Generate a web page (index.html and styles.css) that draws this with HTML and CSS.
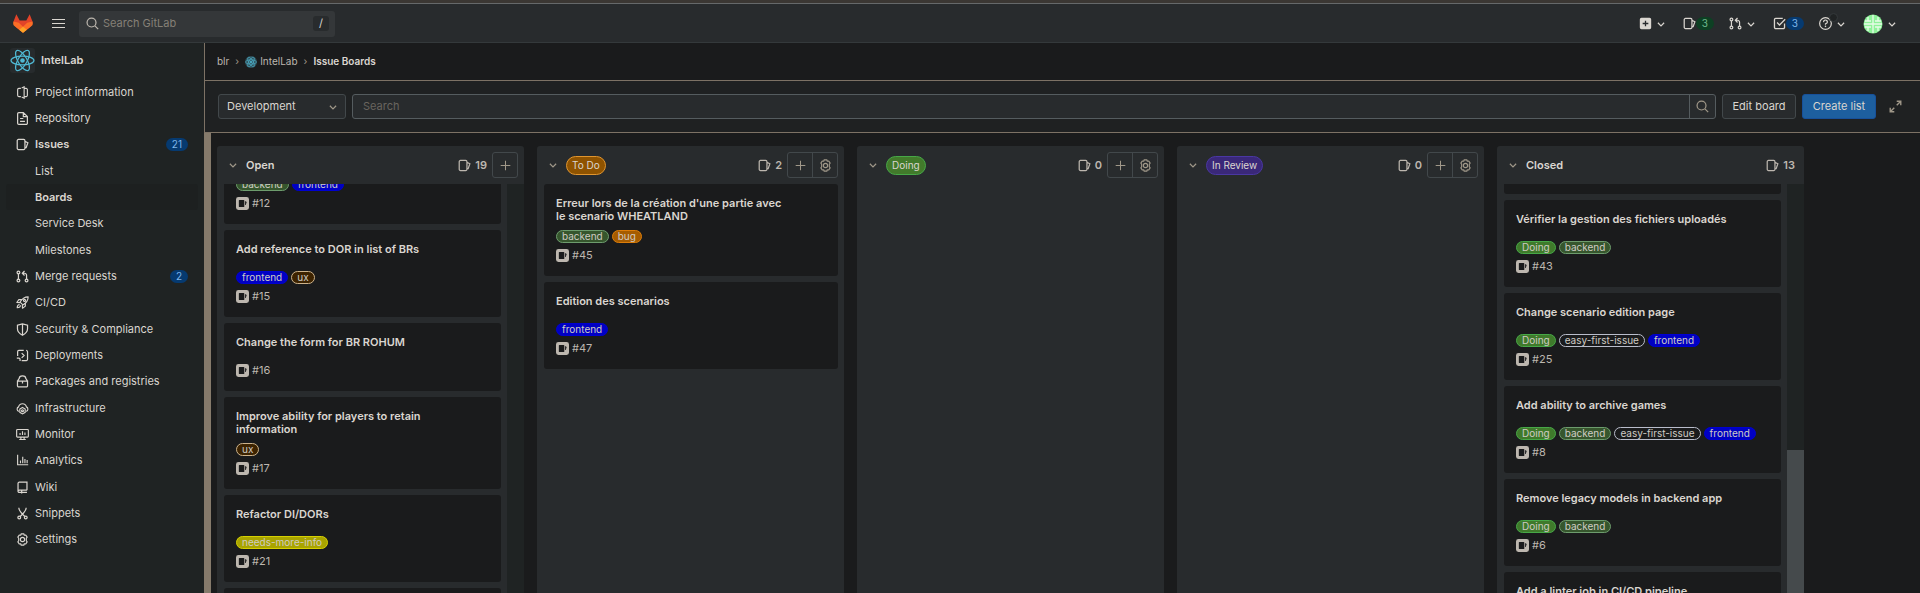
FILE: index.html
```html
<!DOCTYPE html>
<html lang="en">
<head>
<meta charset="utf-8">
<meta name="viewport" content="width=device-width, initial-scale=1">
<title>Issue Boards · IntelLab · GitLab</title>
<link rel="stylesheet" href="styles.css">
</head>
<body>
<svg class="sprite" aria-hidden="true">
  <symbol id="chevron" viewBox="0 0 16 16"><path d="M3 6 8 11 13 6" fill="none" stroke="currentColor" stroke-width="1.900"/></symbol>
  <symbol id="issues" viewBox="0 0 16 16"><path d="M3 1.800h6.500a1.500 1.500 0 0 1 1.500 1.500v9.400a1.500 1.500 0 0 1-1.500 1.500H3a1.500 1.500 0 0 1-1.500-1.500V3.300A1.500 1.500 0 0 1 3 1.800zM11 4.200l3.600 1.600-2.100 6H11" fill="none" stroke="currentColor" stroke-width="1.500"/></symbol>
  <symbol id="type" viewBox="0 0 16 16"><path fill-rule="evenodd" fill="currentColor" d="M3 0h10a3 3 0 0 1 3 3v10a3 3 0 0 1-3 3H3a3 3 0 0 1-3-3V3a3 3 0 0 1 3-3zm1.200 3.700a.7.7 0 0 0-.7.7v7.200a.7.7 0 0 0 .7.7h5.300a.7.7 0 0 0 .7-.7V4.400a.7.7 0 0 0-.7-.7zM11.200 4.800v5h.800L13.200 6z"/></symbol>
  <symbol id="plus" viewBox="0 0 16 16"><path d="M8 1v14M1 8h14" fill="none" stroke="currentColor" stroke-width="1.500"/></symbol>
  <symbol id="plus-square" viewBox="0 0 16 16"><path fill-rule="evenodd" fill="currentColor" d="M3 1h10a2 2 0 0 1 2 2v10a2 2 0 0 1-2 2H3a2 2 0 0 1-2-2V3a2 2 0 0 1 2-2zm4.200 3.500v2.700H4.500v1.600h2.700v2.700h1.600V8.800h2.700V7.200H8.800V4.500z"/></symbol>
  <symbol id="gear" viewBox="0 0 16 16"><g fill="none" stroke="currentColor" stroke-width="1.400"><path d="M6.400 1h3.200l.6 1.700 1.800-.3 1.700 2.700-1 1.400v3l1 1.400-1.700 2.700-1.800-.3-.6 1.700H6.400l-.6-1.700-1.800.3-1.700-2.700 1-1.400v-3l-1-1.400L4 2.400l1.800.3z" stroke-linejoin="round"/><circle cx="8" cy="8" r="2.600"/></g></symbol>
  <symbol id="search" viewBox="0 0 16 16"><g fill="none" stroke="currentColor" stroke-width="1.500"><circle cx="6.800" cy="6.800" r="5.500"/><path d="m11 11 4 4"/></g></symbol>
  <symbol id="merge" viewBox="0 0 16 16"><g fill="none" stroke="currentColor" stroke-width="1.500"><circle cx="3" cy="3" r="1.700"/><circle cx="3" cy="13" r="1.700"/><circle cx="13" cy="13" r="1.700"/><path d="M3 4.700v6.600M13 11.300V6.500A2.500 2.500 0 0 0 10.500 4H8.500M10.500 1.200 7.800 4l2.700 2.800"/></g></symbol>
  <symbol id="todo" viewBox="0 0 16 16"><path d="M12 1.800H3.300a1.500 1.500 0 0 0-1.500 1.500v9.400a1.500 1.500 0 0 0 1.500 1.500h9.400a1.500 1.500 0 0 0 1.500-1.500V8M5 6.800l3 3 7-7" fill="none" stroke="currentColor" stroke-width="1.600"/></symbol>
  <symbol id="help" viewBox="0 0 16 16"><g fill="none" stroke="currentColor" stroke-width="1.500"><circle cx="8" cy="8" r="7.200"/><path d="M5.700 6.300A2.300 2.300 0 1 1 8 8.300v1.300"/></g><circle cx="8" cy="11.500" r="1" fill="currentColor"/></symbol>
  <symbol id="project" viewBox="0 0 16 16"><path d="M6 3H3.500A1.500 1.500 0 0 0 2 4.500v7A1.500 1.500 0 0 0 3.500 13H6M7 2.500l3-1.500v14l-3-1.500M10 3h2.500A1.500 1.500 0 0 1 14 4.500v7a1.500 1.500 0 0 1-1.500 1.500H10" fill="none" stroke="currentColor" stroke-width="1.400"/></symbol>
  <symbol id="doc" viewBox="0 0 16 16"><path d="M9 .800H3.500A1.500 1.500 0 0 0 2 2.300v11.400a1.500 1.500 0 0 0 1.500 1.500h9a1.500 1.500 0 0 0 1.500-1.500V5.500zv5h5M5 8h4M5 11.500h6" fill="none" stroke="currentColor" stroke-width="1.500"/></symbol>
  <symbol id="rocket" viewBox="0 0 16 16"><g fill="none" stroke="currentColor" stroke-width="1.400" stroke-linejoin="round"><path d="M15 1c-5 0-7.500 2-10 6.500L8.500 11C13 8.500 15 6 15 1zM7 4.500H3.500L1 8l4 .2M11.500 9v3.500L8 15l-.2-4M4.500 10.500c-2 0-3 2-3 4 2 0 4-1 4-3"/><circle cx="10.500" cy="5.500" r="1.300"/></g></symbol>
  <symbol id="shield" viewBox="0 0 16 16"><path d="M8 1 1.800 2.800V7c0 3.700 2.400 6 6.200 8 3.800-2 6.200-4.300 6.200-8V2.800zv14" fill="none" stroke="currentColor" stroke-width="1.500"/></symbol>
  <symbol id="deploy" viewBox="0 0 16 16"><path d="M2 8.500V3.300a1.500 1.500 0 0 1 1.500-1.500h6M12.500 1.800A1.700 1.700 0 0 1 14.200 3.500v9.200a1.500 1.500 0 0 1-1.500 1.500H7M1 11.200h2.500A1.500 1.500 0 0 1 5 12.700v2M7 5l3 3-3 3" fill="none" stroke="currentColor" stroke-width="1.500"/></symbol>
  <symbol id="package" viewBox="0 0 16 16"><path d="M1.800 7.500h12.400v5.700a1.500 1.500 0 0 1-1.500 1.500H3.300a1.500 1.500 0 0 1-1.500-1.500zL4 4.200C4 2.500 5.500 1.200 8 1.200s4 1.300 4 3l2.200 3.300M8 7.500v3" fill="none" stroke="currentColor" stroke-width="1.500"/></symbol>
  <symbol id="cloud" viewBox="0 0 16 16"><g fill="none" stroke="currentColor" stroke-width="1.400"><path d="M3.500 11.500a2.900 2.900 0 0 1-.3-5.500A4.900 4.900 0 0 1 12.800 6a2.900 2.900 0 0 1-.3 5.500"/><path d="m8 6.800 3.300 1.900v4L8 14.700l-3.300-2v-4z"/><circle cx="8" cy="10.700" r="1.200"/></g></symbol>
  <symbol id="monitor" viewBox="0 0 16 16"><path d="M1.800 1.800h12.400a1 1 0 0 1 1 1v7.400a1 1 0 0 1-1 1H1.800a1 1 0 0 1-1-1V2.800a1 1 0 0 1 1-1zM4 14.200h8M6 11.500v2.500M10 11.500v2.500M5 6v2.700M8 4v4.700M11 5.500v3.200" fill="none" stroke="currentColor" stroke-width="1.400"/></symbol>
  <symbol id="chart" viewBox="0 0 16 16"><path d="M2 1v12.200h13M5.500 8v3.500M8.300 3.500v8M11 6v5.500M13.700 7.500v4" fill="none" stroke="currentColor" stroke-width="1.400"/></symbol>
  <symbol id="book" viewBox="0 0 16 16"><path d="M13.500 11.500v-10H4A1.500 1.500 0 0 0 2.500 3v9.500A1.500 1.500 0 0 1 4 11.200h9.500M2.500 12.500A1.500 1.500 0 0 0 4 14h9.500M7 11.500v4" fill="none" stroke="currentColor" stroke-width="1.500"/></symbol>
  <symbol id="scissors" viewBox="0 0 16 16"><g fill="none" stroke="currentColor" stroke-width="1.500"><path d="M3.500 1c0 4 3 6 7.500 10.800M12.500 1c0 4-3 6-7.500 10.800"/><circle cx="4" cy="13" r="1.700"/><circle cx="12" cy="13" r="1.700"/></g></symbol>
  <symbol id="expand" viewBox="0 0 16 16"><path d="M9.500 1.500h5v5M14.500 1.500 9.500 6.500M6.500 14.500h-5v-5M1.500 14.500l5-5" fill="none" stroke="currentColor" stroke-width="1.700"/></symbol>
  <symbol id="react" viewBox="0 0 24 24"><g fill="none" stroke="#4fb8d3" stroke-width="1.200"><ellipse cx="12" cy="12" rx="11" ry="4.300"/><ellipse cx="12" cy="12" rx="11" ry="4.300" transform="rotate(60 12 12)"/><ellipse cx="12" cy="12" rx="11" ry="4.300" transform="rotate(120 12 12)"/></g><circle cx="12" cy="12" r="2.200" fill="#4fb8d3"/></symbol>
</svg>

<header class="navbar">
  <a class="logo" href="#" aria-label="GitLab">
    <svg viewBox="0 0 24 22"><path fill="#e24329" d="M12 22 3 15 .5 9 4 0l4 7.500h8L20 0l3.500 9-2.500 6z"/><path fill="#fc6d26" d="M12 22 1 13.500Q-.5 11 .7 8.500L7 10l5 5 5-5 6.300-1.500q1.200 2.500-.3 5z"/><path fill="#fca326" d="m12 22-4.600-3.600L12 15l4.600 3.400z"/></svg>
  </a>
  <button class="plain menu" aria-label="Menu"><svg viewBox="0 0 13 9"><path d="M0 .500h13M0 4.500h13M0 8.500h13" stroke="currentColor"/></svg></button>
  <label class="top-search">
    <svg class="icon"><use href="#search"/></svg>
    <input type="text" placeholder="Search GitLab" aria-label="Search GitLab">
    <kbd>/</kbd>
  </label>
  <nav class="tools" aria-label="Tools">
    <button class="plain" aria-label="Create new"><svg class="icon"><use href="#plus-square"/></svg><svg class="chev"><use href="#chevron"/></svg></button>
    <a class="counted" href="#"><svg class="icon"><use href="#issues"/></svg><span class="badge green">3</span></a>
    <button class="plain" aria-label="Merge requests"><svg class="icon"><use href="#merge"/></svg><svg class="chev"><use href="#chevron"/></svg></button>
    <a class="counted" href="#"><svg class="icon"><use href="#todo"/></svg><span class="badge">3</span></a>
    <button class="plain help" aria-label="Help"><svg class="icon"><use href="#help"/></svg><span class="dot"></span><svg class="chev"><use href="#chevron"/></svg></button>
    <button class="plain user" aria-label="Account"><svg class="face" viewBox="0 0 20 20"><circle cx="10" cy="10" r="9.500" fill="#8ff29a"/><path d="M10 1v18M1 10h18M5 3v4h3M15 3v4h-3M5 17v-4h3M15 17v-4h-3M2 7h3M15 7h3M2 13h3M15 13h3" fill="none" stroke="#e9fbe9" stroke-width="1.300"/></svg><svg class="chev"><use href="#chevron"/></svg></button>
  </nav>
</header>

<div class="page">
  <aside class="sidebar">
    <a class="project" href="#"><svg><use href="#react"/></svg>IntelLab</a>
    <ul class="menu-list">
      <li><a href="#"><svg class="icon"><use href="#project"/></svg>Project information</a></li>
      <li><a href="#"><svg class="icon"><use href="#doc"/></svg>Repository</a></li>
      <li><a class="strong" href="#"><svg class="icon"><use href="#issues"/></svg>Issues<span class="badge">21</span></a></li>
      <li class="sub"><a href="#">List</a></li>
      <li class="sub"><a class="strong active" href="#">Boards</a></li>
      <li class="sub"><a href="#">Service Desk</a></li>
      <li class="sub"><a href="#">Milestones</a></li>
      <li><a href="#"><svg class="icon"><use href="#merge"/></svg>Merge requests<span class="badge">2</span></a></li>
      <li><a href="#"><svg class="icon"><use href="#rocket"/></svg>CI/CD</a></li>
      <li><a href="#"><svg class="icon"><use href="#shield"/></svg>Security &amp; Compliance</a></li>
      <li><a href="#"><svg class="icon"><use href="#deploy"/></svg>Deployments</a></li>
      <li><a href="#"><svg class="icon"><use href="#package"/></svg>Packages and registries</a></li>
      <li><a href="#"><svg class="icon"><use href="#cloud"/></svg>Infrastructure</a></li>
      <li><a href="#"><svg class="icon"><use href="#monitor"/></svg>Monitor</a></li>
      <li><a href="#"><svg class="icon"><use href="#chart"/></svg>Analytics</a></li>
      <li><a href="#"><svg class="icon"><use href="#book"/></svg>Wiki</a></li>
      <li><a href="#"><svg class="icon"><use href="#scissors"/></svg>Snippets</a></li>
      <li><a href="#"><svg class="icon"><use href="#gear"/></svg>Settings</a></li>
    </ul>
  </aside>

  <main class="content">
    <nav class="crumbs" aria-label="Breadcrumb">
      <a href="#">blr</a><span class="sep">›</span>
      <a href="#"><svg><use href="#react"/></svg>IntelLab</a><span class="sep">›</span>
      <a class="here" href="#">Issue Boards</a>
    </nav>

    <div class="filters">
      <div class="picker">
        <select aria-label="Board"><option>Development</option></select>
        <svg class="chev"><use href="#chevron"/></svg>
      </div>
      <div class="search">
        <input type="text" placeholder="Search" aria-label="Search issues">
        <button aria-label="Search"><svg class="icon"><use href="#search"/></svg></button>
      </div>
      <button class="btn">Edit board</button>
      <button class="btn primary">Create list</button>
      <button class="plain expand" aria-label="Full screen"><svg class="icon"><use href="#expand"/></svg></button>
    </div>

    <div class="board">
      <section class="list">
        <header>
          <svg class="chev"><use href="#chevron"/></svg><h2>Open</h2>
          <span class="total"><svg class="icon"><use href="#issues"/></svg>19</span>
          <div class="actions"><button aria-label="New issue"><svg class="small"><use href="#plus"/></svg></button></div>
        </header>
        <div class="body">
          <div class="cards from-labels">
            <article class="card"><div class="labels"><span class="label backend">backend</span><span class="label frontend">frontend</span></div><div class="ref"><svg class="icon"><use href="#type"/></svg>#12</div></article>
            <article class="card"><h3>Add reference to DOR in list of BRs</h3><div class="labels"><span class="label frontend">frontend</span><span class="label ux">ux</span></div><div class="ref"><svg class="icon"><use href="#type"/></svg>#15</div></article>
            <article class="card"><h3>Change the form for BR ROHUM</h3><div class="ref"><svg class="icon"><use href="#type"/></svg>#16</div></article>
            <article class="card"><h3>Improve ability for players to retain information</h3><div class="labels"><span class="label ux">ux</span></div><div class="ref"><svg class="icon"><use href="#type"/></svg>#17</div></article>
            <article class="card"><h3>Refactor DI/DORs</h3><div class="labels"><span class="label info">needs-more-info</span></div><div class="ref"><svg class="icon"><use href="#type"/></svg>#21</div></article>
            <article class="card"></article>
          </div>
          <div class="track"></div>
        </div>
      </section>

      <section class="list">
        <header>
          <svg class="chev"><use href="#chevron"/></svg><h2 class="pill todo">To Do</h2>
          <span class="total"><svg class="icon"><use href="#issues"/></svg>2</span>
          <div class="actions"><button aria-label="New issue"><svg class="small"><use href="#plus"/></svg></button><button aria-label="List settings"><svg class="icon"><use href="#gear"/></svg></button></div>
        </header>
        <div class="body">
          <div class="cards">
            <article class="card"><h3>Erreur lors de la création d'une partie avec le scenario WHEATLAND</h3><div class="labels"><span class="label backend">backend</span><span class="label bug">bug</span></div><div class="ref"><svg class="icon"><use href="#type"/></svg>#45</div></article>
            <article class="card"><h3>Edition des scenarios</h3><div class="labels"><span class="label frontend">frontend</span></div><div class="ref"><svg class="icon"><use href="#type"/></svg>#47</div></article>
          </div>
        </div>
      </section>

      <section class="list">
        <header>
          <svg class="chev"><use href="#chevron"/></svg><h2 class="pill doing">Doing</h2>
          <span class="total"><svg class="icon"><use href="#issues"/></svg>0</span>
          <div class="actions"><button aria-label="New issue"><svg class="small"><use href="#plus"/></svg></button><button aria-label="List settings"><svg class="icon"><use href="#gear"/></svg></button></div>
        </header>
      </section>

      <section class="list">
        <header>
          <svg class="chev"><use href="#chevron"/></svg><h2 class="pill review">In Review</h2>
          <span class="total"><svg class="icon"><use href="#issues"/></svg>0</span>
          <div class="actions"><button aria-label="New issue"><svg class="small"><use href="#plus"/></svg></button><button aria-label="List settings"><svg class="icon"><use href="#gear"/></svg></button></div>
        </header>
      </section>

      <section class="list">
        <header>
          <svg class="chev"><use href="#chevron"/></svg><h2>Closed</h2>
          <span class="total last"><svg class="icon"><use href="#issues"/></svg>13</span>
        </header>
        <div class="body">
          <div class="cards from-edge">
            <article class="card"></article>
            <article class="card"><h3>Vérifier la gestion des fichiers uploadés</h3><div class="labels"><span class="label doing">Doing</span><span class="label backend">backend</span></div><div class="ref"><svg class="icon"><use href="#type"/></svg>#43</div></article>
            <article class="card"><h3>Change scenario edition page</h3><div class="labels"><span class="label doing">Doing</span><span class="label easy">easy-first-issue</span><span class="label frontend">frontend</span></div><div class="ref"><svg class="icon"><use href="#type"/></svg>#25</div></article>
            <article class="card"><h3>Add ability to archive games</h3><div class="labels"><span class="label doing">Doing</span><span class="label backend">backend</span><span class="label easy">easy-first-issue</span><span class="label frontend">frontend</span></div><div class="ref"><svg class="icon"><use href="#type"/></svg>#8</div></article>
            <article class="card"><h3>Remove legacy models in backend app</h3><div class="labels"><span class="label doing">Doing</span><span class="label backend">backend</span></div><div class="ref"><svg class="icon"><use href="#type"/></svg>#6</div></article>
            <article class="card"><h3>Add a linter job in CI/CD pipeline</h3></article>
          </div>
          <div class="track"><div class="thumb"></div></div>
        </div>
      </section>
    </div>
  </main>
</div>
</body>
</html>
```
FILE: styles.css
```css
:root {
  --text: #dad6d0;
  --muted: #bdb7af;
  --faint: #a09889;
  --line: #7d7265;
  --edge: #42484b;
  --panel: #282b2d;
  --ground: #1a1b1c;
}

* { box-sizing: border-box; }

body {
  margin: 0;
  height: 100vh;
  overflow: hidden;
  display: flex;
  flex-direction: column;
  background: var(--ground);
  color: var(--text);
  font: 11px/13px Inter, "Liberation Sans", sans-serif;
}

a { color: inherit; text-decoration: none; }
h2, h3, ul { margin: 0; padding: 0; }
h2, h3 { font-size: 11px; font-weight: 600; }
ul { list-style: none; }
button, input, select { font: inherit; color: inherit; margin: 0; }
button { cursor: pointer; }
svg { display: block; flex: none; }

.sprite { position: absolute; width: 0; height: 0; }
.icon { width: 13px; height: 13px; }
.small { width: 11px; height: 11px; }
.chev { width: 10px; height: 10px; }
.plain { background: none; border: 0; padding: 0; display: flex; align-items: center; }

.badge {
  padding: 0 6px;
  border-radius: 7px;
  background: #063a70;
  color: #7fb6ea;
  font-size: 10px;
  font-weight: 400;
}
.badge.green { background: #0d4023; color: #6fb98c; }

/* Top bar */
.navbar {
  flex: none;
  display: flex;
  align-items: center;
  height: 43px;
  padding: 2px 23px 0 13px;
  background: var(--panel);
  border-top: 3px solid #3b3733;
  border-bottom: 1px solid #34393b;
  box-shadow: inset 0 1px #66696a;
}
.logo svg { width: 20px; height: 19px; }
.menu { margin-left: 19px; }
.menu svg { width: 13px; height: 9px; }
.top-search {
  display: flex;
  align-items: center;
  gap: 4px;
  width: 256px;
  height: 26px;
  margin-left: 14px;
  padding: 0 6px 0 7px;
  border-radius: 3px;
  background: #343739;
  color: var(--muted);
}
.top-search input {
  flex: 1;
  min-width: 0;
  padding: 0;
  border: 0;
  outline: 0;
  background: none;
}
::placeholder { color: #858077; opacity: 1; }
kbd {
  width: 16px;
  border-radius: 3px;
  background: var(--panel);
  color: var(--text);
  font: 11px/15px Inter, sans-serif;
  text-align: center;
}
.tools { display: flex; align-items: center; gap: 17px; margin-left: auto; }
.tools .plain { gap: 4px; }
.tools .counted { display: flex; align-items: center; }
.tools .badge { margin-right: -2px; }
.help { position: relative; }
.dot {
  position: absolute;
  top: -4px;
  left: 10px;
  width: 9px;
  height: 9px;
  border: 1px solid #34393b;
  border-radius: 50%;
  background: #202324;
}
.face { width: 20px; height: 20px; }

/* Page frame */
.page { flex: 1; min-height: 0; display: flex; }
.sidebar { flex: none; width: 204px; overflow: hidden; background: #1f2323; }
.content { flex: 1; min-width: 0; display: flex; flex-direction: column; }

.project {
  display: flex;
  align-items: center;
  gap: 6px;
  padding: 5px 0 6px 10px;
  font-weight: 600;
}
.project svg { width: 25px; height: 25px; border-radius: 3px; background: #272b2d; }
.menu-list { display: grid; grid-auto-rows: 26px 26px 27px; }
.menu-list a {
  display: flex;
  align-items: center;
  gap: 6px;
  height: 100%;
  margin: 0 6px;
  padding: 0 10px;
  border-radius: 3px;
}
.menu-list .sub a { padding-left: 29px; }
.menu-list .strong { font-weight: 600; }
.menu-list .active { background: #1d2020; }
.menu-list .badge { margin-left: auto; }

/* Breadcrumb and filters */
.crumbs {
  display: flex;
  align-items: center;
  gap: 6px;
  height: 38px;
  padding: 0 12px;
  border-left: 1px solid var(--line);
  border-bottom: 1px solid var(--line);
  color: var(--muted);
  font-size: 10px;
}
.crumbs a { display: flex; align-items: center; gap: 3px; }
.crumbs .sep { color: var(--faint); }
.crumbs svg { width: 12px; height: 12px; border-radius: 50%; background: #31525c; }
.crumbs .here { color: var(--text); font-weight: 600; }

.filters {
  display: flex;
  align-items: center;
  gap: 6px;
  height: 52px;
  padding: 0 18px 0 13px;
  border-left: 1px solid var(--line);
  border-bottom: 1px solid var(--line);
  background: #1f2122;
}
.picker { display: grid; align-items: center; width: 128px; color: var(--faint); }
.picker > * { grid-area: 1 / 1; }
.picker .chev { justify-self: end; margin-right: 8px; pointer-events: none; }
.picker select {
  appearance: none;
  height: 25px;
  padding: 0 8px;
  border: 1px solid var(--edge);
  border-radius: 3px;
  background: var(--panel);
  color: var(--text);
}
.search {
  flex: 1;
  display: flex;
  height: 25px;
  border: 1px solid #555c5f;
  border-radius: 3px;
  background: var(--panel);
}
.search input { flex: 1; min-width: 0; padding: 0 10px; border: 0; outline: 0; background: none; }
.search input::placeholder { color: #68655f; }
.search button {
  display: grid;
  place-items: center;
  width: 26px;
  padding: 0;
  border: 0;
  border-left: 1px solid #555c5f;
  background: none;
  color: var(--faint);
}
.btn {
  height: 25px;
  padding: 0 9px;
  min-width: 74px;
  border: 1px solid var(--edge);
  border-radius: 3px;
  background: var(--panel);
}
.btn.primary { border-color: #17509a; background: #1d5f9f; }
.expand { margin-left: 7px; color: var(--faint); }

/* Board */
.board {
  flex: 1;
  min-height: 0;
  display: flex;
  gap: 13px;
  padding: 13px 6px 0;
  overflow: hidden;
  border-left: 7px solid #857a6b;
}
.list {
  flex: none;
  display: flex;
  flex-direction: column;
  width: 307px;
  border-radius: 3px 3px 0 0;
  background: var(--panel);
}
.list header {
  flex: none;
  display: flex;
  align-items: center;
  height: 38px;
  padding: 0 6px 0 11px;
}
.list .chev { color: var(--faint); margin-right: 8px; }
.pill { padding: 0 5px; border: 1px solid; border-radius: 10px; font-size: 10px; font-weight: 400; line-height: 17px; }
.pill.todo { background: #8f5300; border-color: #e0952f; }
.pill.doing { background: #427a2b; border-color: #47a847; }
.pill.review { background: #3a2879; border-color: #4a37a3; }
.total { display: flex; align-items: center; gap: 4px; margin-left: auto; color: var(--muted); font-weight: 600; }
.total.last { margin-right: 3px; }
.actions { display: flex; margin-left: 5px; border: 1px solid var(--edge); border-radius: 3px; }
.actions button {
  display: grid;
  place-items: center;
  width: 24px;
  height: 24px;
  padding: 0;
  border: 0;
  background: none;
  color: var(--faint);
}
.actions button + button { width: 25px; border-left: 1px solid var(--edge); }

.body { flex: 1; min-height: 0; display: flex; overflow: hidden; }
.cards { flex: 1; min-width: 0; padding: 0 6px 0 7px; }
.cards.from-labels { margin-top: -19px; }
.cards.from-edge { margin-top: -17px; }
.card {
  margin-bottom: 6px;
  padding: 13px 12px 14px;
  border-radius: 3px;
  background: var(--ground);
}
.card h3 { min-height: 21px; margin-bottom: 7px; padding-right: 36px; }
.labels { display: flex; gap: 3px; height: 13px; margin-bottom: 6px; }
.label {
  padding: 0 5px;
  border: 1px solid;
  border-radius: 7px;
  color: #cfcbc4;
  font-size: 10px;
  line-height: 10px;
}
.label.backend { background: #36562d; border-color: #6d9c6d; }
.label.frontend { background: #0000c4; border-color: #0000d0; }
.label.ux { background: #3d2300; border-color: #cdb38b; }
.label.info { background: #a9a400; border-color: #d6d100; }
.label.bug { background: #a65c00; border-color: #dc7d0a; }
.label.doing { background: #3f7a2b; border-color: #47a847; }
.label.easy { background: var(--ground); border-color: #b9bdcb; }
.ref { display: flex; align-items: center; gap: 3px; color: var(--muted); }

.track { flex: none; display: flex; flex-direction: column; justify-content: flex-end; width: 17px; background: #1f2323; }
.thumb { height: 35%; background: #454a4c; }
```
